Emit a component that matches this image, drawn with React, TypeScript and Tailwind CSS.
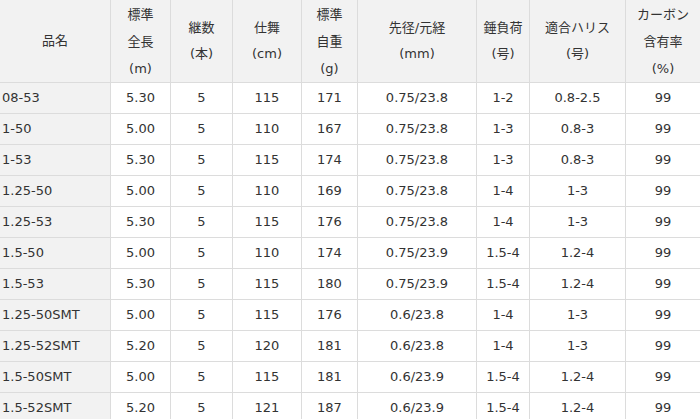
import React from "react";

const rows: string[][] = [
  ["08-53", "5.30", "5", "115", "171", "0.75/23.8", "1-2", "0.8-2.5", "99"],
  ["1-50", "5.00", "5", "110", "167", "0.75/23.8", "1-3", "0.8-3", "99"],
  ["1-53", "5.30", "5", "115", "174", "0.75/23.8", "1-3", "0.8-3", "99"],
  ["1.25-50", "5.00", "5", "110", "169", "0.75/23.8", "1-4", "1-3", "99"],
  ["1.25-53", "5.30", "5", "115", "176", "0.75/23.8", "1-4", "1-3", "99"],
  ["1.5-50", "5.00", "5", "110", "174", "0.75/23.9", "1.5-4", "1.2-4", "99"],
  ["1.5-53", "5.30", "5", "115", "180", "0.75/23.9", "1.5-4", "1.2-4", "99"],
  ["1.25-50SMT", "5.00", "5", "115", "176", "0.6/23.8", "1-4", "1-3", "99"],
  ["1.25-52SMT", "5.20", "5", "120", "181", "0.6/23.8", "1-4", "1-3", "99"],
  ["1.5-50SMT", "5.00", "5", "115", "181", "0.6/23.9", "1.5-4", "1.2-4", "99"],
  ["1.5-52SMT", "5.20", "5", "121", "187", "0.6/23.9", "1.5-4", "1.2-4", "99"],
];

const headers: string[][] = [
  ["品名"],
  ["標準", "全長", "(m)"],
  ["継数", "(本)"],
  ["仕舞", "(cm)"],
  ["標準", "自重", "(g)"],
  ["先径/元経", "(mm)"],
  ["錘負荷", "(号)"],
  ["適合ハリス", "(号)"],
  ["カーボン", "含有率", "(%)"],
];

export default function App() {
  return (
    <div
      className="w-[700px] h-[419px] overflow-hidden bg-white text-[#333] text-[13px]"
      style={{ fontFamily: '"DejaVu Sans", "Noto Sans CJK JP", sans-serif' }}
    >
      <div className="grid grid-cols-[111px_60px_62px_69px_56px_119px_53px_96px_74px]">
        {headers.map((h, i) => (
          <div
            key={"h" + i}
            className={
              "h-[83px] bg-[#f2f2f2] border-b border-[#dcdcdc] flex flex-col items-center justify-center text-center " +
              (h.length === 3 ? "leading-[27px] " : "leading-[26px] ") +
              (i < 8 ? "border-r" : "")
            }
          >
            {h.map((line, j) => (
              <div key={j} className="whitespace-nowrap">
                {line}
              </div>
            ))}
          </div>
        ))}
        {rows.map((r, ri) =>
          r.map((c, ci) => (
            <div
              key={ri + "-" + ci}
              className={
                "h-[31px] border-b border-[#dcdcdc] flex items-center whitespace-nowrap " +
                (ci === 0
                  ? "bg-[#f2f2f2] justify-start pl-[2px] border-r"
                  : ci < 8
                  ? "bg-white justify-center border-r"
                  : "bg-white justify-center")
              }
            >
              {c}
            </div>
          ))
        )}
      </div>
    </div>
  );
}
